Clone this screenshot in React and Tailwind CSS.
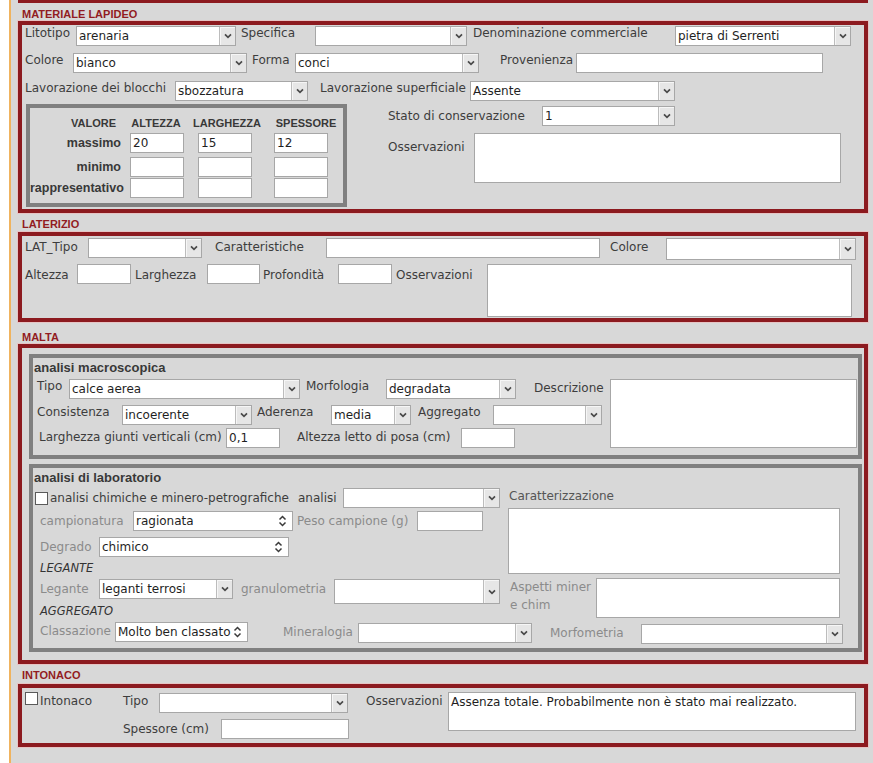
import React from "react";

const RED = "border-[#8c1a1f]";

function Chevron() {
  return (
    <svg width="8" height="6" viewBox="0 0 8 6" className="shrink-0">
      <polyline points="1,1.4 4,4.4 7,1.4" fill="none" stroke="#4a4a4a" strokeWidth="1.7" />
    </svg>
  );
}

function SpinIcon() {
  return (
    <svg width="9" height="14" viewBox="0 0 9 14" className="mr-[5px] shrink-0">
      <polyline points="1.5,5.5 4.5,2.5 7.5,5.5" fill="none" stroke="#3a3a3a" strokeWidth="1.5" />
      <polyline points="1.5,8.5 4.5,11.5 7.5,8.5" fill="none" stroke="#3a3a3a" strokeWidth="1.5" />
    </svg>
  );
}

function Select({ className = "", value = "" }) {
  return (
    <div className={`flex shrink-0 border border-[#a7a7a7] bg-white ${className}`}>
      <div className="min-w-0 flex-1 overflow-hidden whitespace-nowrap pl-[2px] leading-[18px] text-[#1f1f1f]">{value}</div>
      <div className="flex w-[16px] shrink-0 items-center justify-center border-l border-[#bcbcbc] bg-[#e6e6e6] shadow-[inset_1px_1px_0_#f6f6f6]">
        <Chevron />
      </div>
    </div>
  );
}

function Spin({ className = "", value = "" }) {
  return (
    <div className={`flex shrink-0 items-center border border-[#a7a7a7] bg-white ${className}`}>
      <div className="min-w-0 flex-1 overflow-hidden whitespace-nowrap pl-[2px] leading-[18px] text-[#1f1f1f]">{value}</div>
      <SpinIcon />
    </div>
  );
}

function Input({ className = "", value = "" }) {
  return (
    <div className={`shrink-0 overflow-hidden whitespace-nowrap border border-[#a7a7a7] bg-white pl-[2px] leading-[18px] text-[#1f1f1f] ${className}`}>
      {value}
    </div>
  );
}

function Area({ className = "", children }) {
  return <div className={`shrink-0 border border-[#a7a7a7] bg-white text-[#1f1f1f] ${className}`}>{children}</div>;
}

function L({ className = "", children }) {
  return <span className={`block shrink-0 whitespace-nowrap leading-[14px] ${className}`}>{children}</span>;
}

function Check() {
  return <div className="h-[13px] w-[13px] shrink-0 border border-[#5a5a5a] bg-white" />;
}

function H({ className = "", children }) {
  return (
    <div className={`pl-[4px] font-['Liberation_Sans',Arial,sans-serif] text-[11px] font-bold leading-[14px] text-[#921c22] ${className}`}>
      {children}
    </div>
  );
}

function Box({ children }) {
  return <div className={`w-[850px] border-4 ${RED} shadow-[0_0_0_1px_#e6c4c4]`}>{children}</div>;
}

const BOLD = "font-['Liberation_Sans',Arial,sans-serif] font-bold text-[#383838]";
const GRAY = "text-[#8b8b8b]";

function DimRow({ label, a = "", b = "", c = "", className = "" }) {
  return (
    <div className={`flex items-center ${className}`}>
      <div className={`w-[91px] shrink-0 whitespace-nowrap text-right text-[12.5px] leading-[14px] ${BOLD}`}>{label}</div>
      <Input className="ml-[9px] h-[20px] w-[54px]" value={a} />
      <Input className="ml-[14px] h-[20px] w-[54px]" value={b} />
      <Input className="ml-[22px] h-[20px] w-[54px]" value={c} />
    </div>
  );
}

export default function App() {
  return (
    <div className="min-h-[763px] bg-white pl-[9px] font-['DejaVu_Sans',sans-serif] text-[12px] text-[#3d3d3d]">
      <div className="min-h-[763px] border-l-2 border-[#f0b35e] bg-[#d8d8d8] pb-[17px] pl-[7px]">
        <div className="h-[3px] w-[850px] bg-[#8c1a1f]" />

        {/* MATERIALE LAPIDEO */}
        <H className="mt-[4px]">MATERIALE LAPIDEO</H>
        <Box>
          <div className="pb-[2px] pl-[3px] pt-[1px]">
            <div className="flex items-start">
              <L className="w-[51px]">Litotipo</L>
              <Select className="h-[20px] w-[160px]" value="arenaria" />
              <L className="ml-[5px] w-[74px]">Specifica</L>
              <Select className="h-[20px] w-[152px]" />
              <L className="ml-[6px] w-[202px]">Denominazione commerciale</L>
              <Select className="h-[20px] w-[176px]" value="pietra di Serrenti" />
            </div>
            <div className="mt-[7px] flex items-start">
              <L className="w-[48px]">Colore</L>
              <Select className="h-[20px] w-[174px]" value="bianco" />
              <L className="ml-[5px] w-[43px]">Forma</L>
              <Select className="h-[20px] w-[184px]" value="conci" />
              <L className="ml-[21px] w-[76px]">Provenienza</L>
              <Input className="h-[20px] w-[247px]" />
            </div>
            <div className="mt-[8px] flex items-start">
              <L className="w-[150px]">Lavorazione dei blocchi</L>
              <Select className="h-[20px] w-[133px]" value="sbozzatura" />
              <L className="ml-[12px] w-[150px]">Lavorazione superficiale</L>
              <Select className="h-[20px] w-[205px]" value="Assente" />
            </div>
            <div className="mt-[3px] flex items-start">
              <div className="ml-[1px] w-[321px] shrink-0 border-4 border-[#808080] pb-[5px] pt-[8px]">
                <div className={`flex text-[11px] leading-[14px] ${BOLD}`}>
                  <div className="w-[86px] shrink-0 text-right">VALORE</div>
                  <div className="ml-[13px] flex w-[54px] shrink-0 justify-center whitespace-nowrap">ALTEZZA</div>
                  <div className="ml-[17px] flex w-[54px] shrink-0 justify-center whitespace-nowrap">LARGHEZZA</div>
                  <div className="ml-[25px] flex w-[54px] shrink-0 justify-center whitespace-nowrap">SPESSORE</div>
                </div>
                <DimRow className="mt-[3px]" label="massimo" a="20" b="15" c="12" />
                <DimRow className="mt-[4px]" label="minimo" />
                <DimRow className="mt-[1px]" label="rappresentativo" />
              </div>
              <div className="ml-[41px] pt-[2px]">
                <div className="flex items-center">
                  <L className="w-[154px]">Stato di conservazione</L>
                  <Select className="h-[20px] w-[133px]" value="1" />
                </div>
                <div className="mt-[7px] flex items-start">
                  <L className="mt-[7px] w-[86px]">Osservazioni</L>
                  <Area className="h-[50px] w-[367px]" />
                </div>
              </div>
            </div>
          </div>
        </Box>

        {/* LATERIZIO */}
        <H className="mb-[1px] mt-[4px]">LATERIZIO</H>
        <Box>
          <div className="pb-[1px] pl-[3px] pt-[2px]">
            <div className="flex items-start">
              <L className="mt-[2px] w-[63px]">LAT_Tipo</L>
              <Select className="h-[20px] w-[114px]" />
              <L className="ml-[13px] mt-[2px] w-[111px]">Caratteristiche</L>
              <Input className="h-[20px] w-[274px]" />
              <L className="ml-[10px] mt-[2px] w-[56px]">Colore</L>
              <Select className="h-[22px] w-[190px]" />
            </div>
            <div className="mt-[4px] flex items-start">
              <L className="mt-[4px] w-[52px]">Altezza</L>
              <Input className="h-[20px] w-[54px]" />
              <L className="ml-[4px] mt-[4px] w-[72px]">Larghezza</L>
              <Input className="h-[20px] w-[53px]" />
              <L className="ml-[3px] mt-[4px] w-[75px]">Profondità</L>
              <Input className="h-[20px] w-[54px]" />
              <L className="ml-[4px] mt-[4px] w-[91px]">Osservazioni</L>
              <Area className="h-[53px] w-[365px]" />
            </div>
          </div>
        </Box>

        {/* MALTA */}
        <H className="mt-[8px]">MALTA</H>
        <Box>
          <div className="pb-[8px] pl-[7px] pt-[6px]">
            {/* analisi macroscopica */}
            <div className="w-[833px] border-4 border-[#808080] pb-[7px]">
              <div className={`mt-[2px] pl-[1px] text-[13px] leading-[16px] ${BOLD}`}>analisi macroscopica</div>
              <div className="mt-[3px] flex items-start">
                <div className="w-[577px] shrink-0 pl-[4px]">
                  <div className="flex items-start">
                    <L className="w-[32px]">Tipo</L>
                    <Select className="h-[20px] w-[231px]" value="calce aerea" />
                    <L className="ml-[6px] w-[80px]">Morfologia</L>
                    <Select className="h-[20px] w-[130px]" value="degradata" />
                    <L className="ml-[18px] mt-[2px]">Descrizione</L>
                  </div>
                  <div className="mt-[6px] flex items-start">
                    <L className="w-[85px]">Consistenza</L>
                    <Select className="h-[20px] w-[130px]" value="incoerente" />
                    <L className="ml-[5px] w-[74px]">Aderenza</L>
                    <Select className="h-[20px] w-[80px]" value="media" />
                    <L className="ml-[7px] w-[75px]">Aggregato</L>
                    <Select className="h-[20px] w-[109px]" />
                  </div>
                  <div className="mt-[3px] flex items-start">
                    <L className="ml-[2px] mt-[2px] w-[187px]">Larghezza giunti verticali (cm)</L>
                    <Input className="h-[20px] w-[54px]" value="0,1" />
                    <L className="ml-[17px] mt-[2px] w-[164px]">Altezza letto di posa (cm)</L>
                    <Input className="h-[20px] w-[54px]" />
                  </div>
                </div>
                <Area className="h-[69px] w-[247px]" />
              </div>
            </div>

            {/* analisi di laboratorio */}
            <div className="mt-[5px] w-[833px] border-4 border-[#808080] pb-[4px]">
              <div className={`mt-[2px] pl-[1px] text-[13px] leading-[16px] ${BOLD}`}>analisi di laboratorio</div>
              <div className="mt-[2px] flex items-start">
                <div className="w-[475px] shrink-0">
                  <div className="flex h-[20px] items-center">
                    <div className="ml-[2px]">
                      <Check />
                    </div>
                    <L className="ml-[2px] w-[248px]">analisi chimiche e minero-petrografiche</L>
                    <L className="w-[45px]">analisi</L>
                    <Select className="h-[20px] w-[157px]" />
                  </div>
                  <div className="mt-[3px] flex items-center">
                    <L className={`ml-[7px] w-[93px] ${GRAY}`}>campionatura</L>
                    <Spin className="h-[20px] w-[160px]" value="ragionata" />
                    <L className={`ml-[4px] w-[120px] ${GRAY}`}>Peso campione (g)</L>
                    <Input className="h-[20px] w-[66px]" />
                  </div>
                  <div className="mt-[6px] flex items-center">
                    <L className={`ml-[7px] w-[59px] ${GRAY}`}>Degrado</L>
                    <Spin className="h-[20px] w-[190px]" value="chimico" />
                  </div>
                  <div className="mt-[4px] pl-[7px] text-[11.5px] italic leading-[14px] text-[#333]">LEGANTE</div>
                  <div className="mt-[4px] flex items-start">
                    <L className={`ml-[7px] mt-[3px] w-[59px] ${GRAY}`}>Legante</L>
                    <Select className="h-[20px] w-[134px]" value="leganti terrosi" />
                    <L className={`ml-[8px] mt-[3px] w-[93px] ${GRAY}`}>granulometria</L>
                    <Select className="h-[25px] w-[166px]" />
                  </div>
                  <div className="pl-[7px] text-[11.5px] italic leading-[14px] text-[#333]">AGGREGATO</div>
                </div>
                <div>
                  <div className="h-[20px] pl-[1px] pt-[1px]">
                    <L className="text-[#555]">Caratterizzazione</L>
                  </div>
                  <Area className="h-[66px] w-[332px]" />
                  <div className="mt-[4px] flex items-start">
                    <div className={`w-[88px] shrink-0 pl-[2px] leading-[18px] ${GRAY}`}>
                      Aspetti miner
                      <br />e chim
                    </div>
                    <Area className="h-[40px] w-[244px]" />
                  </div>
                </div>
              </div>
              <div className="mt-[4px] flex items-start">
                <L className={`ml-[7px] mt-[2px] w-[75px] ${GRAY}`}>Classazione</L>
                <Spin className="h-[20px] w-[133px]" value="Molto ben classato" />
                <L className={`ml-[35px] mt-[3px] w-[75px] ${GRAY}`}>Mineralogia</L>
                <Select className="mt-[1px] h-[20px] w-[174px]" />
                <L className={`ml-[18px] mt-[4px] w-[91px] ${GRAY}`}>Morfometria</L>
                <Select className="mt-[2px] h-[20px] w-[202px]" />
              </div>
            </div>
          </div>
        </Box>

        {/* INTONACO */}
        <H className="mb-[2px] mt-[4px]">INTONACO</H>
        <Box>
          <div className="flex items-start pb-[4px] pl-[3px] pt-[4px]">
            <div className="flex w-[98px] shrink-0 items-start">
              <Check />
              <L className="ml-[2px] mt-[2px]">Intonaco</L>
            </div>
            <div className="w-[226px] shrink-0">
              <div className="mt-[1px] flex items-start">
                <L className="mt-[1px] w-[36px]">Tipo</L>
                <Select className="h-[20px] w-[189px]" />
              </div>
              <div className="mt-[6px] flex items-start">
                <L className="mt-[3px] w-[98px]">Spessore (cm)</L>
                <Input className="h-[20px] w-[128px]" />
              </div>
            </div>
            <L className="ml-[17px] mt-[2px] w-[82px]">Osservazioni</L>
            <Area className="h-[39px] w-[408px] pl-[2px] pt-[1px] leading-[16px]">
              Assenza totale. Probabilmente non è stato mai realizzato.
            </Area>
          </div>
        </Box>
      </div>
    </div>
  );
}
